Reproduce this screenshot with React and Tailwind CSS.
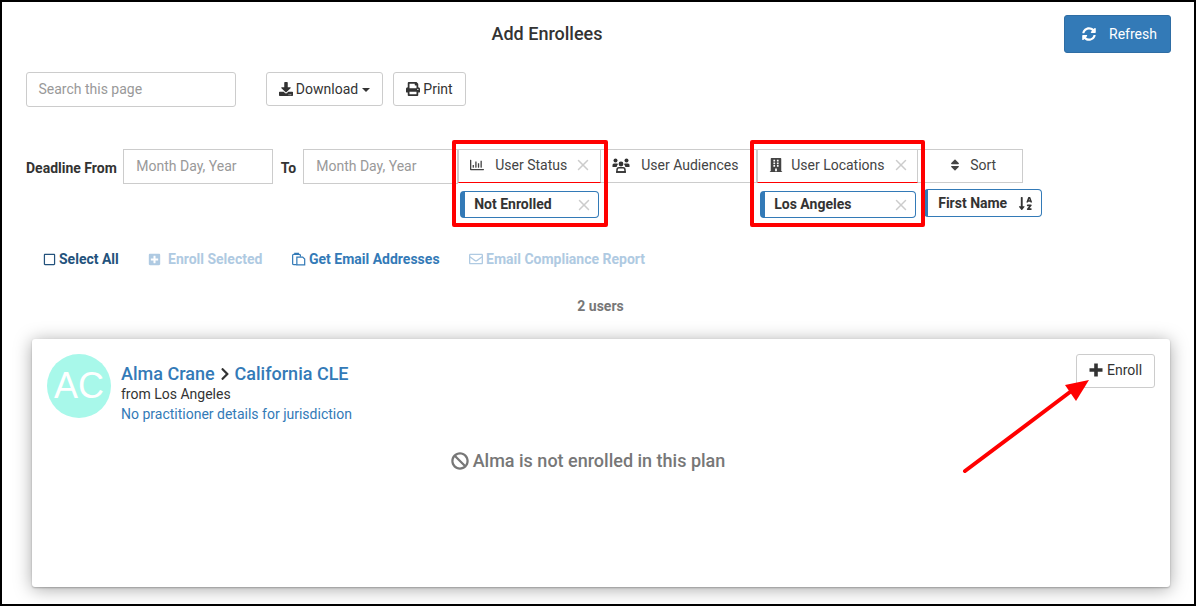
import { X } from "lucide-react";
import {
  FaBan,
  FaBuilding,
  FaChevronRight,
  FaDownload,
  FaPlusSquare,
  FaPrint,
  FaRegChartBar,
  FaRegEnvelope,
  FaRegSquare,
  FaSort,
  FaSortAlphaDown,
  FaSyncAlt,
} from "react-icons/fa";

function UsersIcon() {
  return (
    <svg width="18" height="15" viewBox="0 0 18 15" fill="#333" className="mr-[11px] shrink-0">
      <circle cx="3.5" cy="2.5" r="2" />
      <circle cx="14.5" cy="2.5" r="2" />
      <path d="M0.5 9 V7 Q0.5 5.5 2 5.5 H5 Q5.8 5.5 6 6 Q5 7.5 4.6 9 Z" />
      <path d="M17.5 9 V7 Q17.5 5.5 16 5.5 H13 Q12.2 5.5 12 6 Q13 7.5 13.4 9 Z" />
      <circle cx="9" cy="6" r="2.4" />
      <path d="M5 14 V12 Q5 9.8 7 9.8 H11 Q13 9.8 13 12 V14 Z" fill="none" stroke="#333" strokeWidth="1.5" />
      <path d="M4 14 H14" stroke="#333" strokeWidth="1.5" />
    </svg>
  );
}

function ClipboardIcon() {
  return (
    <svg width="14" height="14" viewBox="0 0 15 14" fill="none" stroke="#337ab7" strokeWidth="1.3" className="shrink-0">
      <path d="M5 13 H1.8 Q0.7 13 0.7 12 V3 Q0.7 2 1.8 2 H8 Q9 2 9 3 V4.5" />
      <path d="M3 2.5 V1 H6.8 V2.5" />
      <path d="M5.2 5 H11.5 L13.6 7 V13.3 H5.2 Z" />
    </svg>
  );
}

function PlusIcon() {
  return (
    <svg width="14" height="14" viewBox="0 0 14 14" className="shrink-0">
      <path d="M7 0.5 V13.5 M0.5 7 H13.5" stroke="#333" strokeWidth="3.6" fill="none" />
    </svg>
  );
}

function Tab({ icon, label, width, pad, onClear }) {
  return (
    <div
      className={`flex h-[34px] items-center border border-[#ccc] pb-[2px] text-[14px] text-[#444] ${width} ${pad} ${
        onClear ? "border-b-[#f00]" : ""
      }`}
    >
      {icon}
      <span>{label}</span>
      {onClear && <X size={18} strokeWidth={2} className="ml-[7px] text-[#ccc]" />}
    </div>
  );
}

function Chip({ label, width }) {
  return (
    <div
      className={`flex h-[27px] items-center justify-between rounded border border-[#337ab7] border-l-[5px] pl-[9px] pr-[5px] text-[14px] font-bold text-[#333] ${width}`}
    >
      <span>{label}</span>
      <X size={18} strokeWidth={2} className="text-[#ccc]" />
    </div>
  );
}

function Action({ icon, label, className }) {
  return (
    <span className={`flex items-center gap-[3px] text-[14px] font-bold ${className}`}>
      {icon}
      {label}
    </span>
  );
}

export default function App() {
  return (
    <div className="relative h-[606px] w-[1196px] overflow-hidden border-2 border-black bg-white font-['Roboto',sans-serif] text-[#333]">
      <div className="flex pl-[28px] pr-[23px] pt-[13px]">
        <div className="flex-1 pt-[5px] text-center text-[18px] font-medium">Add Enrollees</div>
        <button className="flex h-[38px] w-[107px] items-center justify-center gap-[13px] rounded-[3px] border border-[#2e6da4] bg-[#337ab7] pl-[4px] text-[14px] text-white">
          <FaSyncAlt className="text-[14px]" />
          Refresh
        </button>
      </div>

      <div className="mt-[19px] flex items-start pl-[24px]">
        <div className="flex h-[35px] w-[210px] items-center rounded-[3px] border border-[#ccc] pl-[11.5px] text-[14px] text-[#999]">
          Search this page
        </div>
        <button className="ml-[30px] flex h-[34px] w-[117px] items-center justify-center gap-[3px] rounded-[3px] border border-[#ccc] text-[14px]">
          <FaDownload className="text-[14px]" />
          Download
          <span className="ml-[1px] mt-[2px] border-x-[4px] border-t-[4px] border-x-transparent border-t-[#333]" />
        </button>
        <button className="ml-[10px] flex h-[34px] w-[73px] items-center justify-center gap-[3px] rounded-[3px] border border-[#ccc] text-[14px]">
          <FaPrint className="text-[14px]" />
          Print
        </button>
      </div>

      <div className="mt-[42px] flex items-start pl-[24px]">
        <span className="mt-[9px] text-[14px] font-bold">Deadline From</span>
        <div className="ml-[6px] flex h-[35px] w-[150px] items-center border border-[#ccc] pl-[12.5px] text-[14px] text-[#999]">
          Month Day, Year
        </div>
        <span className="ml-[8px] mt-[9px] text-[14px] font-bold">To</span>
        <div className="ml-[7px] flex h-[35px] w-[155px] items-center border border-[#ccc] pl-[12px] text-[14px] text-[#999]">
          Month Day, Year
        </div>
        <div className="flex flex-col">
          <Tab icon={<FaRegChartBar className="mr-[11px] text-[14px]" />} label="User Status" width="w-[143px]" pad="pl-[11px]" onClear />
          <div className="ml-[2px] mt-[8px]">
            <Chip label="Not Enrolled" width="w-[139px]" />
          </div>
        </div>
        <Tab icon={<UsersIcon />} label="User Audiences" width="w-[156px] border-l-0" pad="pl-[11px]" />
        <div className="flex flex-col">
          <Tab icon={<FaBuilding className="mr-[8px] text-[14px]" />} label="User Locations" width="w-[161px]" pad="pl-[11px]" onClear />
          <div className="ml-[3px] mt-[8px]">
            <Chip label="Los Angeles" width="w-[156px]" />
          </div>
        </div>
        <div className="flex flex-col">
          <Tab icon={<FaSort className="mr-[8px] text-[14px]" />} label="Sort" width="w-[105px] border-l-0" pad="pl-[30px]" />
          <div className="ml-[6px] mt-[6px] flex h-[28px] w-[118px] items-center justify-between rounded border border-[#337ab7] border-l-[4px] pl-[10px] pr-[8px] text-[14px] font-bold">
            <span>First Name</span>
            <FaSortAlphaDown className="text-[15px]" />
          </div>
        </div>
      </div>

      <div className="mt-[31px] flex h-[20px] items-center pl-[41px]">
        <Action icon={<FaRegSquare className="text-[13px]" />} label="Select All" className="w-[105px] text-[#23527c]" />
        <Action icon={<FaPlusSquare className="mr-[4px] text-[13px]" />} label="Enroll Selected" className="w-[144px] text-[#afcae2]" />
        <Action icon={<ClipboardIcon />} label="Get Email Addresses" className="w-[177px] text-[#337ab7]" />
        <Action icon={<FaRegEnvelope className="text-[14px]" />} label="Email Compliance Report" className="text-[#afcae2]" />
      </div>

      <div className="mt-[27px] pl-[5px] text-center text-[14px] font-bold text-[#777]">2 users</div>

      <div className="ml-[30px] mt-[22px] h-[248px] w-[1138px] rounded-[3px] bg-white p-[15px] shadow-[0_2px_18px_rgba(0,0,0,0.35),0_1px_2px_rgba(0,0,0,0.25)]">
        <div className="flex items-start">
          <div className="flex h-[64px] w-[64px] items-center justify-center rounded-full bg-[#a8f8ea] font-['Liberation_Sans',sans-serif] text-[36px] text-white">
            AC
          </div>
          <div className="ml-[10px] flex-1">
            <div className="flex items-center gap-[3px] pt-[9px] text-[18px] font-medium leading-[21px] text-[#337ab7]">
              Alma Crane
              <FaChevronRight className="text-[14px] text-[#333]" />
              California CLE
            </div>
            <div className="text-[14px] leading-[20px]">from Los Angeles</div>
            <div className="text-[14px] leading-[20px] text-[#337ab7]">No practitioner details for jurisdiction</div>
          </div>
          <button className="flex h-[34px] w-[79px] items-center justify-center gap-[4px] rounded-[3px] border border-[#ccc] pb-[2px] text-[14px]">
            <PlusIcon />
            Enroll
          </button>
        </div>
        <div className="mt-[23px] flex items-center justify-center gap-[4px] pr-[26px] text-[18px] font-medium text-[#777]">
          <FaBan className="text-[18px]" />
          Alma is not enrolled in this plan
        </div>
      </div>

      {/* annotations drawn over the page */}
      <div className="absolute left-[450px] top-[138px] h-[87px] w-[156px] rounded-[2px] border-[4px] border-[#f00]" />
      <div className="absolute left-[748px] top-[138px] h-[87px] w-[175px] rounded-[2px] border-[4px] border-[#f00]" />
      <svg className="absolute left-[950px] top-[365px]" width="150" height="115" viewBox="0 0 150 115">
        <line x1="13" y1="104" x2="122" y2="22" stroke="#f00" strokeWidth="4" strokeLinecap="round" />
        <polygon points="137,13 113,18 124,34" fill="#f00" />
      </svg>
    </div>
  );
}
